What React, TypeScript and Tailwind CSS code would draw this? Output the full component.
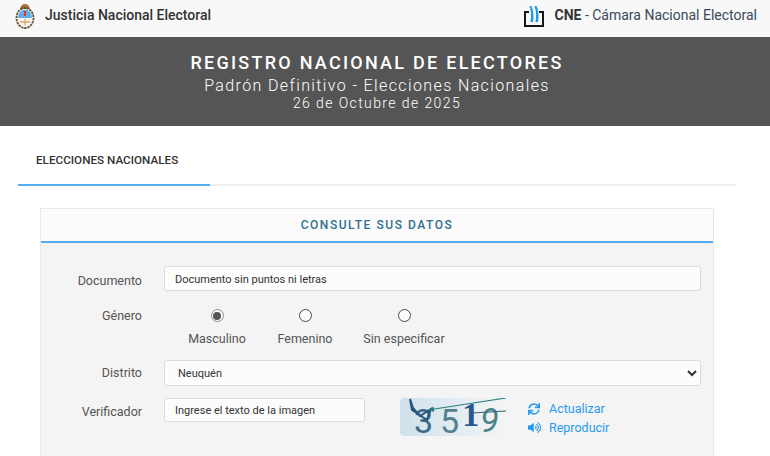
import React from 'react';
import { FaSync, FaVolumeUp } from 'react-icons/fa';

const font = { fontFamily: 'Roboto, sans-serif' };

const Escudo = () => (
  <svg width="20" height="26" viewBox="0 0 20 26" className="shrink-0">
    <path d="M5 6 Q6 1 10 1 Q14 1 15 6 Z" fill="#a86f3c" />
    <ellipse cx="10" cy="15" rx="8.5" ry="10" fill="none" stroke="#5f5236" strokeWidth="1.8" strokeDasharray="2.4 0.8" />
    <ellipse cx="10" cy="15" rx="7" ry="8.5" fill="#fbf3ea" />
    <path d="M3 15 A7 8.5 0 0 1 17 15 Z" fill="#5fb0ea" />
    <rect x="9" y="8" width="2" height="5" fill="#e2332d" />
    <path d="M5 19 L15 19 M10 16 L10 22" stroke="#d6a878" strokeWidth="1.3" />
  </svg>
);

const CneLogo = () => (
  <svg width="20" height="22" viewBox="0 0 20 22" className="shrink-0">
    <path d="M5 7 H1 V21 H19 V7 H15" fill="none" stroke="#161616" strokeWidth="2" />
    <path d="M5.5 1 Q8 8 6.5 17 H9 Q10.5 8 7.5 1 Z" fill="#1f9de0" />
    <path d="M10.5 1 Q13 8 11.5 17 H14 Q15.5 8 12.5 1 Z" fill="#1f9de0" />
  </svg>
);

const Captcha = () => (
  <div className="relative h-[38px] w-[107px] rounded-sm bg-gradient-to-r from-[#cfe0ea] via-[#e2ecf2] to-[#f4f4f4]">
    <div className="absolute left-[14px] top-[10px] flex items-end text-[34px] leading-[26px]">
      <span className="text-[#3f6a86]">3</span>
      <span className="ml-[7px] text-[#55808f]">5</span>
      <span className="ml-[3px] -translate-y-[6px] font-bold text-[#27598c]" style={{ fontFamily: '"Liberation Serif", serif' }}>1</span>
      <span className="ml-[1px] -translate-y-[1px] italic text-[#4b8488]">9</span>
    </div>
    <svg width="107" height="38" viewBox="0 0 107 38" className="absolute left-0 top-0">
      <path d="M10 1 L13 10 L20 18 L31 11 L27 22 L12 12 Z" fill="none" stroke="#24557a" strokeWidth="2" />
      <path d="M28 12 L106 0" stroke="#2b7f80" strokeWidth="1.2" />
      <path d="M28 12 L34 9 L34 14 Z" fill="#2b7f80" />
      <path d="M72 15 L106 13" stroke="#35606f" strokeWidth="1.2" />
    </svg>
  </div>
);

const Radio = ({ label, checked, width }: { label: string; checked?: boolean; width: string }) => (
  <label className={`flex flex-col items-center ${width}`}>
    <span className={`flex h-[13px] w-[13px] items-center justify-center rounded-full border-[1.5px] ${checked ? 'border-[#8c8c8c]' : 'border-[#4a4a4a]'} bg-[#fbfbfb]`}>
      {checked && <span className="h-[8px] w-[8px] rounded-full bg-[#555]" />}
    </span>
    <span className="mt-[7px] text-[12.5px] leading-[20px] text-[#555]">{label}</span>
  </label>
);

export default function App() {
  return (
    <div className="h-[456px] w-[770px] overflow-hidden bg-white" style={font}>
      {/* Top Bar */}
      <header className="flex h-[37px] items-center justify-between bg-[#f8f8f8] pl-[15px] pr-[13px]">
        <div className="flex items-center gap-[10px] pb-[8px] pt-[2px]">
          <Escudo />
          <span className="text-[14px] font-medium text-[#333]">Justicia Nacional Electoral</span>
        </div>
        <div className="flex items-center gap-[11px] pb-[6px]">
          <CneLogo />
          <span className="text-[14px] text-[#3b4a5a]"><b className="font-bold text-[#333]">CNE</b> - Cámara Nacional Electoral</span>
        </div>
      </header>

      {/* Banner */}
      <div className="flex h-[89px] flex-col items-center bg-[#555555] pr-[16px] pt-[13px] text-center text-white">
        <h1 className="text-[18px] font-medium leading-[25px] tracking-[2.26px]">REGISTRO NACIONAL DE ELECTORES</h1>
        <p className="mt-[1px] text-[16px] font-light leading-[19px] tracking-[1.38px]">Padrón Definitivo - Elecciones Nacionales</p>
        <p className="text-[14px] font-light leading-[16px] tracking-[1.4px]">26 de Octubre de 2025</p>
      </div>

      {/* Tabs */}
      <div className="ml-[18px] mr-[34px] h-[60px] border-b-2 border-[#f0f0f0]">
        <div className="h-[60px] w-[192px] border-b-2 border-[#55acee] pl-[18px] pt-[26px] text-[11.7px] font-medium leading-[16px] text-[#333]">
          ELECCIONES NACIONALES
        </div>
      </div>

      {/* Panel */}
      <section className="ml-[40px] mt-[22px] w-[674px] border border-[#e8e8e8] bg-[#f4f4f4]">
        <div className="h-[34px] border-b-2 border-[#55acee] bg-[#fbfbfb] pt-[8px] text-center text-[12px] font-medium leading-[16px] tracking-[1.55px] text-[#31708f]">
          CONSULTE SUS DATOS
        </div>

        <div className="pt-[23px]">
          <div className="flex items-center">
            <label className="w-[101px] pt-[5px] text-right text-[12.5px] text-[#555]">Documento</label>
            <input
              readOnly
              value="Documento sin puntos ni letras"
              className="ml-[22px] h-[25px] w-[537px] rounded-[3px] border border-[#dcdcdc] bg-[#fcfcfc] pl-[10px] pt-[1px] text-[11px] text-[#333]"
            />
          </div>

          <div className="mt-[17px] flex items-start">
            <label className="w-[101px] text-right text-[12.5px] leading-[16px] text-[#555]">Género</label>
            <div className="ml-[23px] flex pt-[1px]">
              <Radio label="Masculino" checked width="w-[104px]" />
              <Radio label="Femenino" width="w-[72px]" />
              <Radio label="Sin especificar" width="w-[126px]" />
            </div>
          </div>

          <div className="mt-[11px] flex items-center">
            <label className="w-[101px] text-right text-[12.5px] text-[#555]">Distrito</label>
            <select className="ml-[22px] h-[26px] w-[537px] appearance-auto rounded-[3px] border border-[#dcdcdc] bg-[#fcfcfc] pl-[9px] text-[11px] text-[#333]">
              <option>Neuquén</option>
            </select>
          </div>

          <div className="mt-[12px] flex items-start">
            <label className="w-[101px] pt-[5px] text-right text-[12.5px] text-[#555]">Verificador</label>
            <input
              readOnly
              value="Ingrese el texto de la imagen"
              className="ml-[22px] h-[24px] w-[201px] rounded-[3px] border border-[#dcdcdc] bg-[#fcfcfc] pl-[10px] text-[11px] text-[#333]"
            />
            <div className="ml-[35px]"><Captcha /></div>
            <div className="ml-[21px] flex flex-col pt-[1px] text-[12.5px] leading-[19px] text-[#2a9af0]">
              <span className="flex items-center gap-[9px]"><FaSync size={12} />Actualizar</span>
              <span className="flex items-center gap-[8px]"><FaVolumeUp size={13} />Reproducir</span>
            </div>
          </div>
          <div className="h-[40px]" />
        </div>
      </section>
    </div>
  );
}
